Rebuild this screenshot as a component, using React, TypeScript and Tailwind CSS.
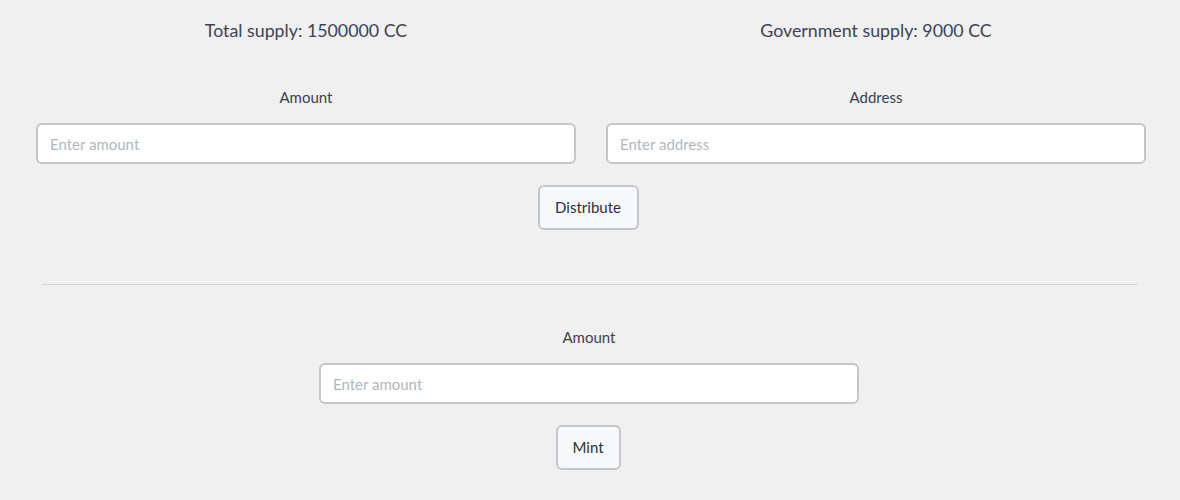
import React from 'react';

const font = { fontFamily: 'Lato, "Open Sans", sans-serif' };

const Field: React.FC<{ label: string; placeholder: string }> = ({ label, placeholder }) => (
    <div className="flex flex-col items-center">
        <label className="text-[15px] leading-[20px] text-[#3a4150] mb-[16px]">{label}</label>
        <input
            placeholder={placeholder}
            className="w-[540px] h-[41px] bg-white border-2 border-[#c3c7cb] rounded-[6px] px-[12px] text-[15px] text-[#3a4150] placeholder:text-[#aeb8c2] outline-none"
        />
    </div>
);

const Button: React.FC<{ children: React.ReactNode; className?: string }> = ({ children, className }) => (
    <button className={`h-[45px] bg-[#f7f8fa] border-2 border-[#c3c7cb] rounded-[6px] text-[15px] text-[#2c2f38] ${className ?? ''}`}>
        {children}
    </button>
);

export default function App() {
    return (
        <div className="min-h-[500px] bg-[#f0f0f0] text-[#3b4455]" style={font}>
            <div className="w-[1110px] ml-[36px] grid grid-cols-2 gap-x-[30px] pt-[19px]">
                <div className="text-center text-[17.8px] leading-[22px]">Total supply: 1500000 CC</div>
                <div className="text-center text-[17.8px] leading-[22px]">Government supply: 9000 CC</div>
                <div className="mt-[46px]">
                    <Field label="Amount" placeholder="Enter amount" />
                </div>
                <div className="mt-[46px]">
                    <Field label="Address" placeholder="Enter address" />
                </div>
            </div>
            <div className="flex justify-center pt-[21px] pr-[4px]">
                <Button className="w-[101px]">Distribute</Button>
            </div>
            <div className="mx-[42px] mt-[54px] border-t border-[#d4d4d4]" />
            <div className="flex flex-col items-center pt-[42px] pr-[2px]">
                <Field label="Amount" placeholder="Enter amount" />
                <Button className="w-[65px] mt-[21px] mr-[2px]">Mint</Button>
            </div>
        </div>
    );
}
